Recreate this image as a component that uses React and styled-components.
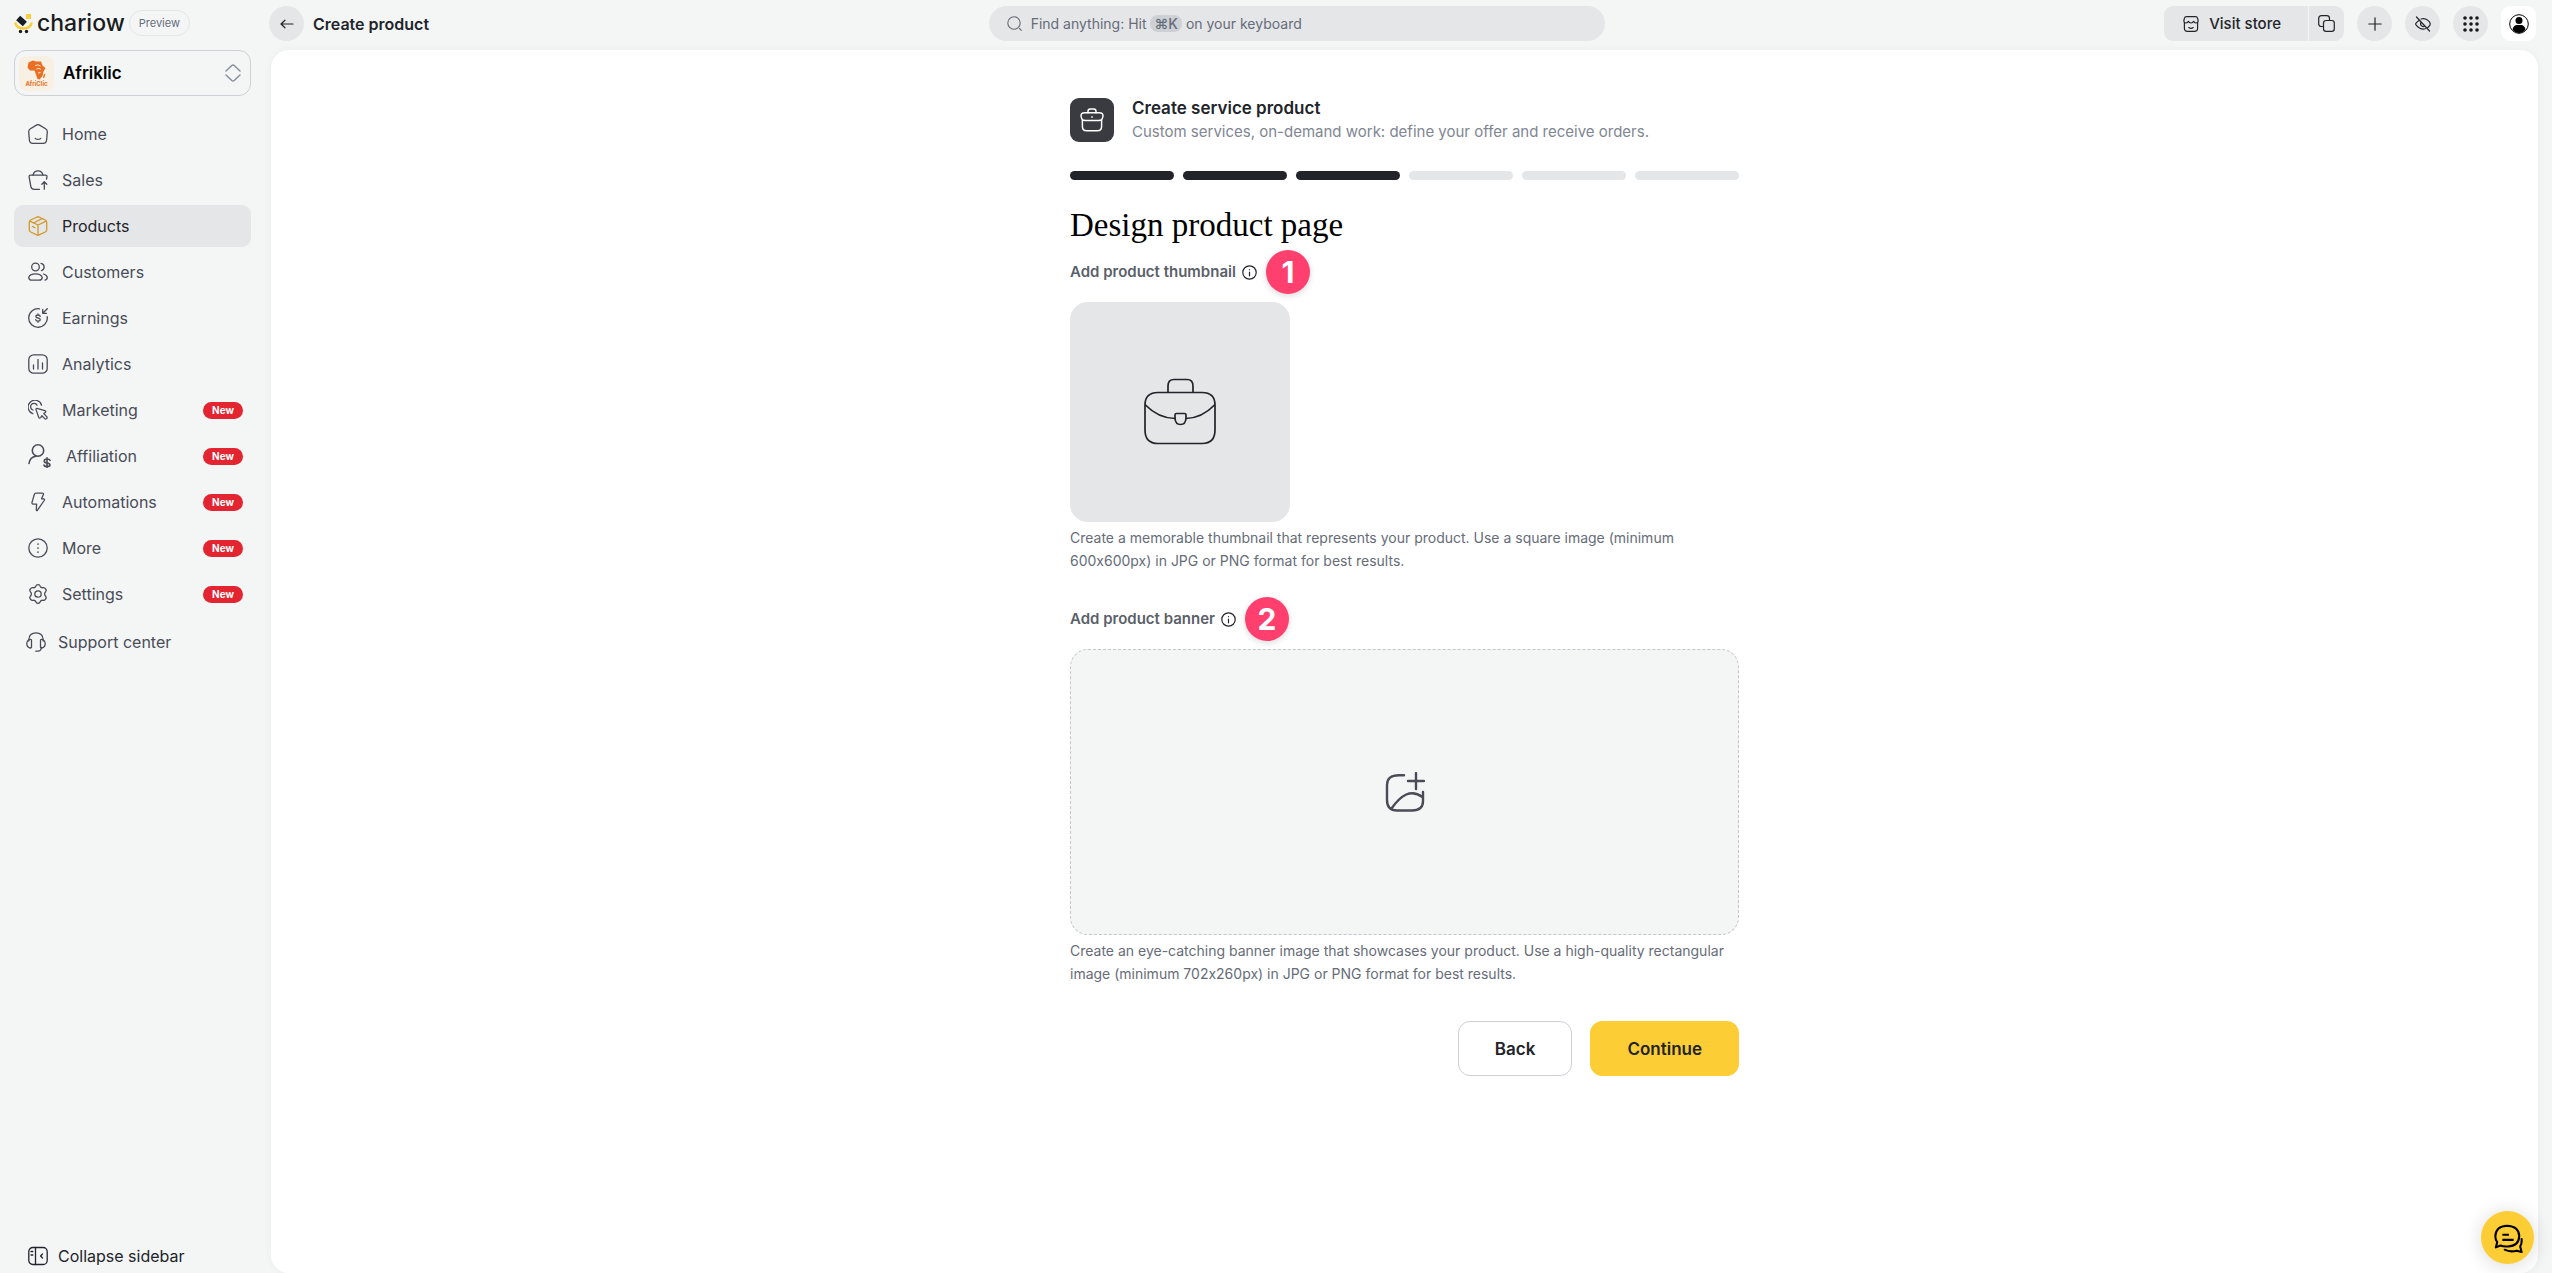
import React from "react";
import styled, { createGlobalStyle } from "styled-components";

const GlobalStyle = createGlobalStyle`
  :root {
    --color-page: #f4f6f6;
    --color-fill: #e5e6e8;
    --color-line: #cdd0d5;
    --color-ink: #22242a;
    --color-text: #494c56;
    --color-muted: #666c78;
    --color-subtle: #808692;
    --color-gold: #d39a2a;
    --color-yellow: #fdcd35;
    --color-red: #e32431;
    --color-pink: #ff3f6e;
  }

  * {
    box-sizing: border-box;
  }

  body {
    margin: 0;
    background-color: var(--color-page);
    color: var(--color-ink);
    font-family: Inter, "Liberation Sans", sans-serif;
    font-size: 16px;
    font-feature-settings: "calt" 0;
  }

  button {
    font-family: inherit;
    border: none;
    padding: 0;
    cursor: pointer;
    color: inherit;
  }

  a {
    color: inherit;
    text-decoration: none;
  }

  svg {
    display: block;
    flex-shrink: 0;
  }
`;

// page shell
const Layout = styled.div`
  display: grid;
  grid-template-columns: 269px minmax(0, 1fr);
  min-height: 100vh;
`;

const Sidebar = styled.aside`
  display: flex;
  flex-direction: column;
  padding: 0 18px 5px 14px;
`;

const BrandRow = styled.div`
  display: flex;
  align-items: center;
  gap: 4px;
  height: 50px;
  padding-bottom: 4px;
`;

const Brand = styled.a`
  display: flex;
  align-items: center;
  gap: 4px;
  color: #191b20;
  font-size: 23px;
  font-weight: 500;
  line-height: 28px;
`;

const PreviewTag = styled.span`
  display: flex;
  align-items: center;
  height: 26px;
  padding: 0 9px;
  border: 1px solid #e3e5e7;
  border-radius: 13px;
  color: var(--color-muted);
  font-size: 11px;
`;

const StoreButton = styled.button`
  display: flex;
  align-items: center;
  gap: 9px;
  height: 46px;
  padding: 0 9px 0 4px;
  border: 1px solid var(--color-line);
  border-radius: 12px;
  background-color: transparent;
  color: #000;
  font-size: 17px;
  font-weight: 600;
  text-align: left;

  span {
    flex: 1;
  }
`;

const Nav = styled.nav`
  display: flex;
  flex-direction: column;
  gap: 4px;
  flex: 1;
  padding-top: 17px;
`;

const NavItem = styled.a`
  display: flex;
  align-items: center;
  gap: ${({ $tight }) => ($tight ? "12px" : "14px")};
  height: 42px;
  padding: 0 8px 0 ${({ $tight }) => ($tight ? "12px" : "14px")};
  margin-top: ${({ $tight }) => ($tight ? "2px" : "0")};
  border-radius: 9px;
  background-color: ${({ $active }) =>
    $active ? "var(--color-fill)" : "transparent"};
  color: ${({ $active }) =>
    $active ? "var(--color-ink)" : "var(--color-text)"};
  line-height: 20px;

  svg {
    color: ${({ $active }) => ($active ? "var(--color-gold)" : "inherit")};
  }

  span {
    flex: 1;
  }
`;

const NewBadge = styled.em`
  display: flex;
  align-items: center;
  height: 17px;
  padding: 0 9px;
  border-radius: 9px;
  background-color: var(--color-red);
  color: #fff;
  font-size: 10px;
  font-style: normal;
  font-weight: 700;
`;

const CollapseButton = styled.button`
  display: flex;
  align-items: center;
  gap: 10px;
  height: 24px;
  padding-left: 14px;
  background-color: transparent;
  font-size: 16px;
`;

// top bar
const Column = styled.div`
  display: flex;
  flex-direction: column;
  padding-right: 14px;
`;

const TopBar = styled.header`
  display: flex;
  justify-content: space-between;
  align-items: center;
  height: 50px;
  padding: 0 2px 3px 0;
`;

const TopLeft = styled.div`
  display: flex;
  align-items: center;
  gap: 9px;
  font-weight: 600;
  font-size: 16px;
`;

const RoundButton = styled.button`
  display: grid;
  place-items: center;
  width: 35px;
  height: 35px;
  border-radius: 50%;
  background-color: var(--color-fill);
`;

const SearchButton = styled.button`
  display: flex;
  align-items: center;
  gap: 9px;
  flex: 0 1 616px;
  height: 35px;
  padding: 0 18px;
  border-radius: 18px;
  background-color: var(--color-fill);
  color: var(--color-muted);
  font-size: 14px;
  line-height: 18px;

  kbd {
    padding: 0 4px;
    border-radius: 8px;
    background-color: var(--color-line);
    font-family: inherit;
    font-weight: 500;
  }
`;

const TopRight = styled.div`
  display: flex;
  gap: 13px;
`;

const StoreGroup = styled.div`
  display: flex;
  gap: 1px;
`;

const VisitButton = styled.button`
  display: flex;
  align-items: center;
  gap: 10px;
  height: 35px;
  padding: 0 27px 0 19px;
  border-radius: 9px 0 0 9px;
  background-color: var(--color-fill);
  font-size: 15px;
  font-weight: 500;
`;

const CopyButton = styled(RoundButton)`
  border-radius: 0 9px 9px 0;
`;

const AvatarButton = styled(RoundButton)`
  border-radius: 9px;
  background-color: #fff;
`;

// content card
const Card = styled.main`
  flex: 1;
  margin-left: 2px;
  padding: 46px 24px;
  border-radius: 18px;
  background-color: #fff;
  box-shadow: 0 0 10px rgba(0, 0, 0, 0.04);
`;

const Wizard = styled.form`
  max-width: 669px;
  margin: 0 auto;
`;

const Intro = styled.div`
  display: flex;
  align-items: center;
  gap: 18px;
`;

const IntroIcon = styled.div`
  display: grid;
  place-items: center;
  width: 44px;
  height: 44px;
  border-radius: 9px;
  background-color: #3a3b40;
  color: #fff;
`;

const IntroTitle = styled.h1`
  margin: 0;
  font-size: 17px;
  font-weight: 600;
  line-height: 24px;
`;

const IntroText = styled.p`
  margin: 0;
  color: var(--color-subtle);
  font-size: 15px;
  line-height: 24px;
`;

const Steps = styled.ol`
  display: grid;
  grid-template-columns: repeat(6, 1fr);
  gap: 9px;
  margin: 27px 0 0;
  padding: 0;
  list-style: none;
`;

const Step = styled.li`
  height: 9px;
  border-radius: 5px;
  background-color: ${({ $done }) =>
    $done ? "var(--color-ink)" : "var(--color-fill)"};
`;

const Heading = styled.h2`
  margin: 25px 0 5px;
  color: #000;
  font-family: "Liberation Serif", "Times New Roman", serif;
  font-size: 33px;
  font-weight: 400;
  line-height: 40px;
`;

const Field = styled.section`
  & + & {
    margin-top: 25px;
  }
`;

const FieldLabel = styled.div`
  display: flex;
  align-items: center;
  gap: 9px;
  height: 44px;
  margin-bottom: 8px;
`;

const FieldName = styled.span`
  display: flex;
  align-items: center;
  gap: 6px;
  color: #5a5f69;
  font-size: 15px;
  font-weight: 600;
  line-height: 20px;

  svg {
    color: var(--color-ink);
  }
`;

const Marker = styled.span`
  display: grid;
  place-items: center;
  width: 44px;
  height: 44px;
  border-radius: 50%;
  background-color: var(--color-pink);
  box-shadow: 0 2px 6px rgba(0, 0, 0, 0.15);
  color: #fff;
  font-size: 30px;
  font-weight: 700;
  line-height: 44px;
`;

const Thumbnail = styled.button`
  display: grid;
  place-items: center;
  width: 220px;
  height: 220px;
  border-radius: 18px;
  background-color: var(--color-fill);
`;

const Banner = styled.button`
  display: grid;
  place-items: center;
  width: 100%;
  height: 286px;
  border: 1px dashed #c3c7cb;
  border-radius: 18px;
  background-color: var(--color-page);
  color: var(--color-text);
`;

const Hint = styled.p`
  margin: 4px 0 0;
  color: var(--color-muted);
  font-size: 14px;
  line-height: 23px;
`;

const Actions = styled.div`
  display: flex;
  justify-content: flex-end;
  gap: 18px;
  margin-top: 36px;
`;

const ActionButton = styled.button`
  height: 55px;
  padding: 0 36px;
  border: 1px solid
    ${({ $primary }) => ($primary ? "var(--color-yellow)" : "var(--color-line)")};
  border-radius: 12px;
  background-color: ${({ $primary }) =>
    $primary ? "var(--color-yellow)" : "#fff"};
  font-size: 17px;
  font-weight: 600;
`;

const ChatButton = styled.button`
  position: fixed;
  right: 18px;
  bottom: 9px;
  display: grid;
  place-items: center;
  width: 53px;
  height: 53px;
  border-radius: 50%;
  background-color: var(--color-yellow);
  box-shadow: 0 2px 20px rgba(0, 0, 0, 0.15);
  color: #000;
`;

function Icon({ size = 20, box = size, stroke = 1.3, children }) {
  return (
    <svg
      width={size}
      height={size}
      viewBox={`0 0 ${box} ${box}`}
      fill="none"
      stroke="currentColor"
      strokeWidth={stroke}
      strokeLinecap="round"
      strokeLinejoin="round"
      aria-hidden="true"
    >
      {children}
    </svg>
  );
}

const icons = {
  home: (
    <Icon>
      <path d="M8.4 1.1Q10 .1 11.600 1.1L17.600 4.800Q19.400 6 19.300 8L18.600 16Q18.300 19.300 15.200 19.300H4.800Q1.700 19.300 1.400 16L.7 8Q.6 6 2.400 4.800Z" />
      <path d="M7.300 14.400Q10 16.400 12.700 14.400" />
    </Icon>
  ),
  sales: (
    <Icon>
      <path d="M11.5 19.3H6.2Q3.2 19.3 2.8 16.4L1.2 7.4Q.6 5.2 2.6 5.2H17.4Q19.3 5.2 18.9 7.2L18.5 9.2" />
      <path d="M5 5.2C5.5 2.4 7.5.8 10 .8s4.5 1.6 5 4.4" />
      <path d="M16.300 19.200V12M13.800 14.200L16.300 11.700 18.800 14.200" />
    </Icon>
  ),
  products: (
    <Icon>
      <path d="M10 .7L17.3 4Q18.700 4.800 18.700 6.200V13.800Q18.700 15.300 17.300 16L10 19.400 2.700 16Q1.300 15.300 1.300 13.800V6.200Q1.300 4.800 2.700 4Z" />
      <path d="M1.800 5.200L10 9 18.200 5.200M10 9V19M5.600 7L14 2.600M4.500 10.500L6.800 11.600" />
    </Icon>
  ),
  customers: (
    <Icon>
      <circle cx="7.5" cy="5" r="3.800" />
      <path d="M13 1.400A3.700 3.700 0 0 1 13.500 8.600M3.800 18.200H11Q14.200 18.200 14.200 15.400 13.200 11.800 7.500 11.800 1.700 11.800.8 15.400.9 18.200 3.800 18.200ZM15.500 12Q19 13 19.300 15.600 19.300 17.700 17 18.200" />
    </Icon>
  ),
  earnings: (
    <Icon>
      <path d="M11.500.8A9.300 9.300 0 1 0 19.200 8.600M19.300.8L15 5M14.700 1.500V5.300H18.500" />
      <path d="M12.200 8.400Q12 7 10 7 7.900 7 7.900 8.500 7.900 9.800 10 10 12.200 10.200 12.200 11.600 12.200 13.200 10 13.200 7.900 13.200 7.700 11.700M10 5.900V7M10 13.200V14.300" />
    </Icon>
  ),
  analytics: (
    <Icon>
      <rect x=".8" y=".8" width="18.4" height="18.4" rx="4.8" />
      <path d="M5.500 11V15M10 5.500V15M14.500 9V15" />
    </Icon>
  ),
  marketing: (
    <Icon>
      <path d="M4.800 13.700A6.900 6.900 0 1 1 13.600 5.200M5 10A3.400 3.400 0 1 1 9 5.100" />
      <path d="M9 8.400L16.800 10.600Q18.800 11.500 16.900 12.800L15.800 13.600 18.900 16.900Q19.500 18 18.500 18.800 17.500 19.500 16.700 18.600L13.900 15.700 12.700 17.600Q11.400 19 10.700 17.200L8 9.600Q7.800 8.300 9 8.400Z" />
    </Icon>
  ),
  affiliation: (
    <Icon size={24} stroke={1.6}>
      <circle cx="10" cy="6.500" r="5.700" />
      <path d="M1 19.500Q1.800 13.200 8 12.300" />
      <path d="M22 16.300Q21.500 15 19 15 16.200 15 16.200 17 16.200 18.700 19 19 22 19.300 22 21 22 22.600 19 22.600 16.300 22.600 16 21M19 13.700V23.700" />
    </Icon>
  ),
  automations: (
    <Icon>
      <path d="M8 1.100H14.200Q16 1.100 15.300 2.700L13.500 6.800H15.600Q17 7.200 16.200 8.500L9.500 18.200Q8.300 19.300 8.300 17.600L8.600 12.100H5.200Q3.700 11.800 4 10.400L6.300 2.500Q6.700 1.100 8 1.100Z" />
    </Icon>
  ),
  more: (
    <Icon>
      <circle cx="10" cy="10" r="9.2" />
      <path d="M10 6V6.100M10 10V10.100M10 14V14.100" strokeWidth="1.700" />
    </Icon>
  ),
  settings: (
    <Icon>
      <circle cx="10" cy="10" r="3.200" />
      <path d="M7.800 2.300Q8.300.7 10 .7T12.200 2.300Q12.900 4 14.700 3.700 16.500 3.200 17.500 4.800 18.900 6.300 17.800 7.500 16.600 8.700 16.600 10T17.800 12.500Q18.900 13.700 17.500 15.200 16.500 16.800 14.700 16.300 12.900 16 12.200 17.700 11.700 19.300 10 19.300T7.800 17.700Q7.100 16 5.300 16.300 3.500 16.800 2.500 15.200 1.100 13.700 2.200 12.500 3.400 11.300 3.400 10T2.200 7.500Q1.100 6.300 2.500 4.800 3.500 3.200 5.300 3.700 7.100 4 7.800 2.300Z" />
    </Icon>
  ),
  support: (
    <Icon>
      <path d="M2.800 9V7.500Q3.300.8 10 .8T17.200 7.500V9M15.500 15.500Q15.200 18.500 12.500 19.200H9.800" />
      <path d="M5.500 8.700Q5.700 7.200 4.300 7.400.8 8.300.8 11.700T4.300 16Q5.700 16.100 5.500 14.500ZM14.500 8.700Q14.300 7.200 15.700 7.400 19.200 8.300 19.200 11.700T15.700 16Q14.300 16.100 14.500 14.500Z" />
    </Icon>
  ),
  collapse: (
    <Icon>
      <rect x=".8" y="1.5" width="18.4" height="17" rx="4" />
      <path d="M7.500 1.500V18.500M3 5.500H4.800M3 9H4.800M14.500 8L12.600 10 14.500 12" />
    </Icon>
  ),
  back: (
    <Icon size={14} stroke={1.2}>
      <path d="M13 7H1M5 3.200L1 7 5 10.800" />
    </Icon>
  ),
  search: (
    <Icon size={15} stroke={1.1}>
      <circle cx="7" cy="7" r="6.200" />
      <path d="M12.500 12.500L14.300 14.300" />
    </Icon>
  ),
  store: (
    <Icon size={16} stroke={1.2}>
      <path d="M1.400 6.500V12.200Q1.400 15.300 4.500 15.300H11.500Q14.600 15.300 14.600 12.200V6.500" />
      <path d="M3.500.7H12.500Q14.200.7 14.600 2.300L15.200 5Q15 7 13 7 11.300 7 10.600 5.300 9.800 7 8 7T5.400 5.300Q4.700 7 3 7 1 7 .8 5L1.400 2.300Q1.800.7 3.500.7Z" />
      <path d="M5.800 11.600Q8 13.200 10.200 11.600" />
    </Icon>
  ),
  copy: (
    <Icon size={17} stroke={1.2}>
      <rect x="5.5" y="5.5" width="10.8" height="10.8" rx="2.6" />
      <path d="M5.500 11.500H3.500Q.7 11.500.7 8.700V3.500Q.7.700 3.500.7H8.700Q11.500.7 11.500 3.500V5.500" />
    </Icon>
  ),
  plus: (
    <Icon size={14} stroke={1.2}>
      <path d="M7 .8V13.200M.8 7H13.200" />
    </Icon>
  ),
  hidden: (
    <Icon size={16} stroke={1.2}>
      <path d="M1.500 1L14.500 15M6 3Q10.500 1.500 13.800 5.200 16.600 8 13.900 10.500L12.500 11.800M4 4.400Q2 5.800 1 7.200.4 8 1 8.800 5.400 14.300 10.400 12.700M9.800 9.900A2.600 2.600 0 0 1 6.200 6.200" />
    </Icon>
  ),
  briefcase: (
    <Icon size={24} box={18} stroke={1.1}>
      <path d="M6 3.500V2.500Q6 .8 7.700.8H10.300Q12 .8 12 2.500V3.500" />
      <path d="M3.500 3.500H14.500Q17.400 3.500 17.200 6 17 9.400 14 9.400H4Q1 9.400.8 6 .6 3.500 3.500 3.500Z" />
      <path d="M1.800 9V13.800Q1.800 17 5 17H13Q16.200 17 16.200 13.800V9M9 6.500V7" />
    </Icon>
  ),
  info: (
    <Icon size={15} stroke={1.2}>
      <circle cx="7.5" cy="7.5" r="6.700" />
      <path d="M7.500 7V10.800M7.500 4.600V4.700" />
    </Icon>
  ),
  addImage: (
    <Icon size={40} stroke={2.4}>
      <path d="M19 3.200H14Q2 3.200 2 13V28Q2 38.500 12 38.500H27Q38 38.500 38 29V20" />
      <path d="M6.500 36.500C16 23 26 16.500 37.500 25M31 1V17M23 9H39" />
    </Icon>
  ),
  chat: (
    <Icon size={30} box={32} stroke={2.2}>
      <path d="M3 26L4.500 20.500Q2.500 18 2.500 14 3 3.500 15 3 27.500 3.500 28 14 27.500 24.500 16 25 11 25.300 8 24Z" />
      <path d="M10 12.500H17M10 18H22" strokeLinecap="butt" />
      <path d="M30.500 17Q31 22 29 25L30.500 31 25.500 29.500Q18 31.500 12.500 28.500" />
    </Icon>
  ),
};

const navItems = [
  { label: "Home", icon: "home" },
  { label: "Sales", icon: "sales" },
  { label: "Products", icon: "products", active: true },
  { label: "Customers", icon: "customers" },
  { label: "Earnings", icon: "earnings" },
  { label: "Analytics", icon: "analytics" },
  { label: "Marketing", icon: "marketing", isNew: true },
  { label: "Affiliation", icon: "affiliation", isNew: true },
  { label: "Automations", icon: "automations", isNew: true },
  { label: "More", icon: "more", isNew: true },
  { label: "Settings", icon: "settings", isNew: true },
  { label: "Support center", icon: "support", tight: true },
];

function Logo() {
  return (
    <svg width="19" height="21" viewBox="0 0 19 21" aria-hidden="true">
      <path
        d="M1.200 9.500Q2.500 15.500 9.500 15.500T17.800 9.500"
        fill="none"
        stroke="#fdcd35"
        strokeWidth="2.400"
      />
      <rect x="12" y="1" width="5" height="5" fill="#fdcd35" />
      <rect
        x="4.500"
        y="3.500"
        width="6"
        height="9"
        fill="#191b20"
        transform="rotate(-48 7.500 8)"
      />
      <circle cx="6.500" cy="18.500" r="1.700" fill="#191b20" />
      <circle cx="12.500" cy="18.500" r="1.700" fill="#191b20" />
    </svg>
  );
}

function StoreLogo() {
  return (
    <svg width="35" height="35" viewBox="0 0 35 35" aria-hidden="true">
      <rect width="35" height="35" rx="8" fill="#f8f0e2" />
      <path
        d="M9.500 6.500L14 4.500 17 5.500 22 5.500 23.500 9.500 26.500 12 24.500 15.500 23.500 20 20.500 23.500 18.500 23 17 18.500 15.500 14.500 11 14.500 8.500 11.500Z"
        fill="#ea6f22"
      />
      <path
        d="M16 9.500Q19 8 21.500 10M17.500 13Q20 11.500 22 13.500M19 17L21.500 16.500"
        fill="none"
        stroke="#f8f0e2"
        strokeWidth=".9"
      />
      <path d="M24.500 19L26.500 17.500 25.500 21.500 24 22Z" fill="#ea6f22" />
      <text
        x="17.5"
        y="30"
        textAnchor="middle"
        fontFamily="Inter, sans-serif"
        fontSize="6"
        fontWeight="700"
        fill="#ea6f22"
      >
        AfriClic
      </text>
    </svg>
  );
}

function AppsIcon() {
  const dots = [2, 8, 14];
  return (
    <svg width="16" height="16" viewBox="0 0 16 16" aria-hidden="true">
      {dots.map((y) =>
        dots.map((x) => (
          <circle key={`${x}-${y}`} cx={x} cy={y} r="1.8" fill="#17181c" />
        ))
      )}
    </svg>
  );
}

function AvatarIcon() {
  return (
    <svg width="20" height="20" viewBox="0 0 20 20" aria-hidden="true">
      <circle cx="10" cy="10" r="9.3" fill="none" stroke="#000" />
      <circle cx="10" cy="6.5" r="3.5" fill="#000" />
      <path d="M3.500 15.500Q4.500 11 8 11H12Q15.500 11 16.500 15.500 14 19 10 19T3.500 15.500Z" />
    </svg>
  );
}

function BagDrawing() {
  return (
    <Icon size={72} stroke={1.7}>
      <path d="M24 16V10Q24 3.500 30 3.500H43Q49 3.500 49 10V16" />
      <path d="M14 16.500H58Q71 16.500 71 29V54Q71 67.500 58 67.500H14Q1 67.500 1 54V29Q1 16.500 14 16.500Z" />
      <path d="M1.500 29Q14 42 31 42.500M42 42.500Q58 42 70.500 29" />
      <path d="M31 39Q31 37.500 32.500 37.500H40.500Q42 37.500 42 39V42.500Q41.500 48.500 36.500 48.500T31 42.500Z" />
    </Icon>
  );
}

function NavRow({ item }) {
  return (
    <NavItem
      href="#"
      $active={item.active}
      $tight={item.tight}
      aria-current={item.active ? "page" : undefined}
    >
      {icons[item.icon]}
      <span>{item.label}</span>
      {item.isNew && <NewBadge>New</NewBadge>}
    </NavItem>
  );
}

function UploadField({ label, marker, hint, children }) {
  return (
    <Field>
      <FieldLabel>
        <FieldName>
          {label} {icons.info}
        </FieldName>
        <Marker>{marker}</Marker>
      </FieldLabel>
      {children}
      <Hint>{hint}</Hint>
    </Field>
  );
}

export default function App() {
  return (
    <>
      <GlobalStyle />
      <Layout>
        <Sidebar>
          <BrandRow>
            <Brand href="#">
              <Logo />
              chariow
            </Brand>
            <PreviewTag>Preview</PreviewTag>
          </BrandRow>
          <StoreButton>
            <StoreLogo />
            <span>Afriklic</span>
            <svg
              width="16"
              height="18"
              viewBox="0 0 16 18"
              fill="none"
              stroke="#868c98"
              strokeWidth="1.4"
              strokeLinecap="round"
              strokeLinejoin="round"
            >
              <path d="M1 7L6.800 1.500Q8 .5 9.200 1.500L15 7M1 11L6.800 16.500Q8 17.500 9.200 16.500L15 11" />
            </svg>
          </StoreButton>
          <Nav>
            {navItems.map((item) => (
              <NavRow key={item.label} item={item} />
            ))}
          </Nav>
          <CollapseButton>
            {icons.collapse}
            Collapse sidebar
          </CollapseButton>
        </Sidebar>

        <Column>
          <TopBar>
            <TopLeft>
              <RoundButton aria-label="Go back">{icons.back}</RoundButton>
              Create product
            </TopLeft>
            <SearchButton>
              {icons.search}
              <span>
                Find anything: Hit <kbd>⌘K</kbd> on your keyboard
              </span>
            </SearchButton>
            <TopRight>
              <StoreGroup>
                <VisitButton>
                  {icons.store}
                  Visit store
                </VisitButton>
                <CopyButton aria-label="Copy link">{icons.copy}</CopyButton>
              </StoreGroup>
              <RoundButton aria-label="Add">{icons.plus}</RoundButton>
              <RoundButton aria-label="Hide amounts">{icons.hidden}</RoundButton>
              <RoundButton aria-label="Apps">
                <AppsIcon />
              </RoundButton>
              <AvatarButton aria-label="Account">
                <AvatarIcon />
              </AvatarButton>
            </TopRight>
          </TopBar>

          <Card>
            <Wizard onSubmit={(e) => e.preventDefault()}>
              <Intro>
                <IntroIcon>{icons.briefcase}</IntroIcon>
                <div>
                  <IntroTitle>Create service product</IntroTitle>
                  <IntroText>
                    Custom services, on-demand work: define your offer and
                    receive orders.
                  </IntroText>
                </div>
              </Intro>
              <Steps>
                {[1, 2, 3, 4, 5, 6].map((n) => (
                  <Step key={n} $done={n <= 3} />
                ))}
              </Steps>
              <Heading>Design product page</Heading>
              <UploadField
                label="Add product thumbnail"
                marker="1"
                hint="Create a memorable thumbnail that represents your product. Use a square image (minimum 600x600px) in JPG or PNG format for best results."
              >
                <Thumbnail type="button" aria-label="Add product thumbnail">
                  <BagDrawing />
                </Thumbnail>
              </UploadField>
              <UploadField
                label="Add product banner"
                marker="2"
                hint="Create an eye-catching banner image that showcases your product. Use a high-quality rectangular image (minimum 702x260px) in JPG or PNG format for best results."
              >
                <Banner type="button" aria-label="Add product banner">
                  {icons.addImage}
                </Banner>
              </UploadField>
              <Actions>
                <ActionButton type="button">Back</ActionButton>
                <ActionButton type="submit" $primary>
                  Continue
                </ActionButton>
              </Actions>
            </Wizard>
          </Card>
        </Column>
      </Layout>
      <ChatButton aria-label="Open chat">{icons.chat}</ChatButton>
    </>
  );
}
